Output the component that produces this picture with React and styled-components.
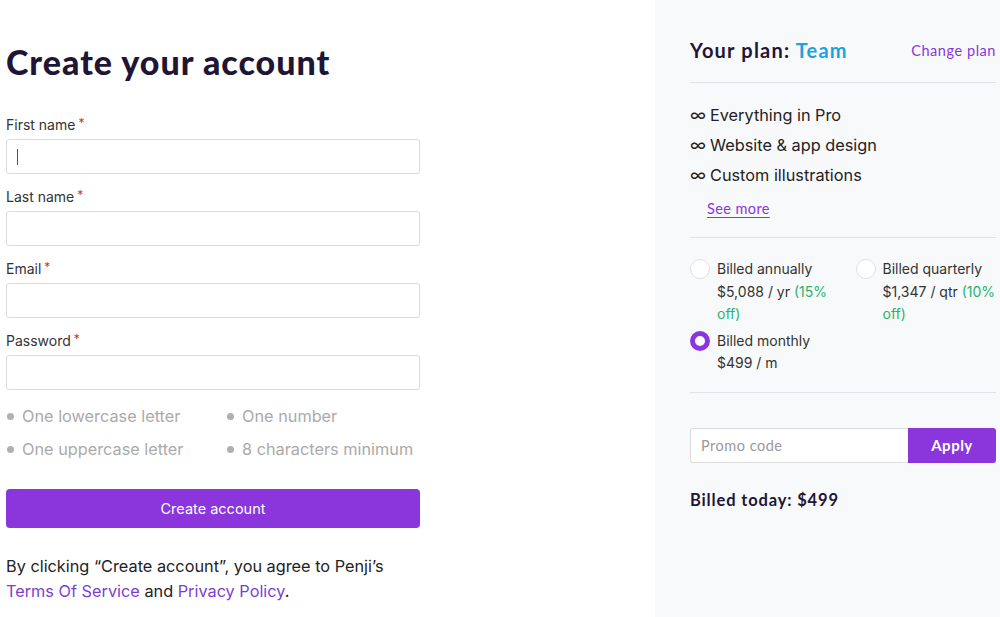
import React from "react";
import styled, { createGlobalStyle } from "styled-components";

const Global = createGlobalStyle`
  html, body { margin: 0; padding: 0; background: #fff; }
  body { font-family: Inter, "Noto Sans", sans-serif; color: #222; }
  * { box-sizing: border-box; }
`;

const Page = styled.div`
  display: flex;
  width: 1000px;
  height: 617px;
  overflow: hidden;
`;

const Main = styled.div`
  width: 655px;
  padding: 0 0 0 6px;
`;

const Form = styled.div`
  width: 414px;
  display: flex;
  flex-direction: column;
`;

const Title = styled.h1`
  margin: 40px 0 0;
  font-family: Lato, sans-serif;
  font-weight: 900;
  font-size: 34px;
  line-height: 44px;
  color: #1f1535;
  letter-spacing: 1px;
`;

const Field = styled.div`
  display: flex;
  flex-direction: column;
  gap: 4px;
  margin-top: ${(p) => p.$top}px;
`;

const Label = styled.label`
  font-size: 14px;
  line-height: 20px;
  color: #333;
`;

const Star = styled.span`
  color: #d0342c;
  margin-left: 3px;
  font-size: 12px;
  vertical-align: top;
  line-height: 16px;
`;

const Input = styled.div`
  height: 35px;
  border: 1px solid #dcdcdc;
  border-radius: 3px;
  background: #fff;
  display: flex;
  align-items: center;
  padding-left: 10px;
`;

const Caret = styled.span`
  width: 1px;
  height: 16px;
  background: #555;
`;

const Reqs = styled.div`
  margin-top: 14px;
  display: grid;
  grid-template-columns: 220px 1fr;
  row-gap: 9px;
`;

const Req = styled.div`
  display: flex;
  align-items: center;
  gap: 8px;
  font-size: 16.3px;
  line-height: 24px;
  color: #aaa;
  padding-left: 1px;
  &::before {
    content: "";
    width: 7px;
    height: 7px;
    border-radius: 50%;
    background: #b0b0b0;
  }
`;

const Submit = styled.button`
  margin-top: 28px;
  height: 39px;
  border: none;
  border-radius: 4px;
  background: #8a36dc;
  color: #fff;
  font-family: Inter, sans-serif;
  font-size: 14.5px;
`;

const Terms = styled.p`
  margin: 26px 0 0;
  font-size: 16.3px;
  line-height: 25px;
  color: #222;
`;

const Link = styled.a`
  color: #7b3fd0;
  text-decoration: none;
`;

const Side = styled.aside`
  flex: 1;
  background: #f8f9fb;
  padding: 0 4px 0 35px;
  display: flex;
  flex-direction: column;
`;

const PlanHead = styled.div`
  display: flex;
  justify-content: space-between;
  align-items: center;
  height: 83px;
  padding-top: 18px;
  border-bottom: 1px solid #e2e2e6;
`;

const PlanTitle = styled.div`
  font-family: Lato, sans-serif;
  font-weight: 700;
  font-size: 20px;
  color: #1f1535;
  letter-spacing: 1.2px;
`;

const Team = styled.span`
  color: #1aa3e0;
`;

const SmallLink = styled.a`
  font-family: Lato, sans-serif;
  font-size: 14.5px;
  color: #8a36dc;
  letter-spacing: 0.55px;
`;

const Features = styled.div`
  padding: 17px 0 18px;
  border-bottom: 1px solid #e2e2e6;
  display: flex;
  flex-direction: column;
`;

const Feature = styled.div`
  font-size: 16.3px;
  line-height: 30px;
  color: #222;
  display: flex;
  align-items: center;
  gap: 4px;
`;

const Inf = styled.span`
  font-size: 17px;
  width: 16px;
  color: #222;
`;

const SeeMore = styled.a`
  margin: 9px 0 0 17px;
  font-family: Lato, sans-serif;
  font-size: 14.5px;
  line-height: 20px;
  color: #8a36dc;
  letter-spacing: 0.4px;
  text-decoration: underline;
  text-underline-offset: 3px;
`;

const Billing = styled.div`
  padding: 21px 0 17px;
  border-bottom: 1px solid #e2e2e6;
  display: grid;
  grid-template-columns: 1fr 1fr;
  column-gap: 25px;
  row-gap: 5px;
`;

const Option = styled.div`
  display: flex;
  gap: 7px;
  align-items: flex-start;
`;

const Radio = styled.span`
  flex: none;
  width: 20px;
  height: 20px;
  border-radius: 50%;
  background: #fff;
  border: ${(p) => (p.$on ? "5px solid #8a36dc" : "1px solid #e0e0e4")};
`;

const OptText = styled.div`
  font-size: 14px;
  line-height: 22.5px;
  color: #333;
  margin-top: -1px;
`;

const Off = styled.span`
  color: #29b36a;
`;

const Promo = styled.div`
  margin-top: 35px;
  display: flex;
  height: 35px;
`;

const PromoInput = styled.div`
  flex: 1;
  background: #fff;
  border: 1px solid #dcdcdc;
  border-right: none;
  border-radius: 3px 0 0 3px;
  display: flex;
  align-items: center;
  padding-left: 10px;
  font-family: Lato, sans-serif;
  font-size: 14.5px;
  color: #999;
  letter-spacing: 0.5px;
`;

const Apply = styled.button`
  width: 88px;
  border: none;
  border-radius: 0 3px 3px 0;
  background: #8a36dc;
  color: #fff;
  font-family: Lato, sans-serif;
  font-weight: 700;
  font-size: 15px;
  letter-spacing: 0.5px;
`;

const Today = styled.div`
  margin-top: 27px;
  font-family: Lato, sans-serif;
  font-weight: 700;
  font-size: 16.5px;
  color: #1f1535;
  letter-spacing: 0.85px;
`;

const fields = [
  { label: "First name", top: 31, caret: true },
  { label: "Last name", top: 13 },
  { label: "Email", top: 13 },
  { label: "Password", top: 13 },
];

export default function App() {
  return (
    <Page>
      <Global />
      <Main>
        <Form>
          <Title>Create your account</Title>
          {fields.map((f) => (
            <Field key={f.label} $top={f.top}>
              <Label>
                {f.label}
                <Star>*</Star>
              </Label>
              <Input>{f.caret && <Caret />}</Input>
            </Field>
          ))}
          <Reqs>
            <Req>One lowercase letter</Req>
            <Req>One number</Req>
            <Req>One uppercase letter</Req>
            <Req>8 characters minimum</Req>
          </Reqs>
          <Submit>Create account</Submit>
          <Terms>
            By clicking “Create account”, you agree to Penji’s
            <br />
            <Link>Terms Of Service</Link> and <Link>Privacy Policy</Link>.
          </Terms>
        </Form>
      </Main>
      <Side>
        <PlanHead>
          <PlanTitle>
            Your plan: <Team>Team</Team>
          </PlanTitle>
          <SmallLink>Change plan</SmallLink>
        </PlanHead>
        <Features>
          {["Everything in Pro", "Website & app design", "Custom illustrations"].map((t) => (
            <Feature key={t}>
              <Inf>∞</Inf>
              {t}
            </Feature>
          ))}
          <SeeMore>See more</SeeMore>
        </Features>
        <Billing>
          <Option>
            <Radio />
            <OptText>
              Billed annually
              <br />
              $5,088 / yr <Off>(15% off)</Off>
            </OptText>
          </Option>
          <Option>
            <Radio />
            <OptText>
              Billed quarterly
              <br />
              $1,347 / qtr <Off>(10% off)</Off>
            </OptText>
          </Option>
          <Option>
            <Radio $on />
            <OptText>
              Billed monthly
              <br />
              $499 / m
            </OptText>
          </Option>
        </Billing>
        <Promo>
          <PromoInput>Promo code</PromoInput>
          <Apply>Apply</Apply>
        </Promo>
        <Today>Billed today: $499</Today>
      </Side>
    </Page>
  );
}
